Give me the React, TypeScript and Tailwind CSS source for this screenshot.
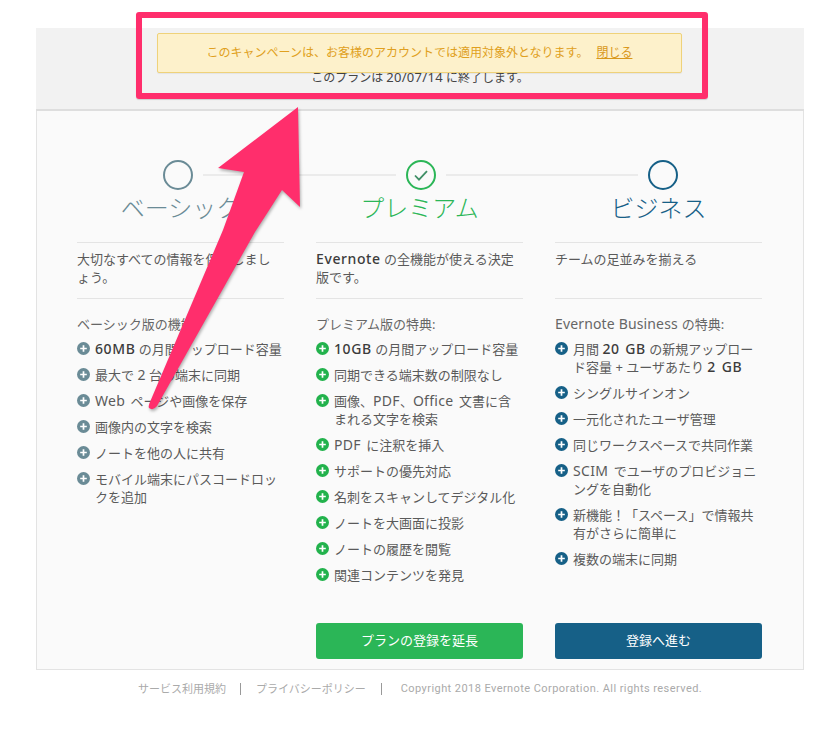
import React from "react";

const FONT = "font-['Noto_Sans','Noto_Sans_CJK_JP',sans-serif]";

function Plus({ color }: { color: string }) {
  return (
    <svg width="13" height="13" viewBox="0 0 13 13" className="absolute left-0 top-[2px]">
      <circle cx="6.5" cy="6.5" r="6.5" fill={color} />
      <path d="M6.5 3.2v6.6M3.2 6.5h6.6" stroke="#fff" strokeWidth="1.7" />
    </svg>
  );
}

function Item({ color, children }: { color: string; children: React.ReactNode }) {
  return (
    <li className="relative pl-[18px] mb-[8px] text-[13px] leading-[18px]">
      <Plus color={color} />
      {children}
    </li>
  );
}

const L = ({ children }: { children: React.ReactNode }) => (
  <span className="text-[14px] tracking-[0.3px] [word-spacing:1.5px]">{children}</span>
);

const B = ({ children }: { children: React.ReactNode }) => (
  <span className="text-[14px] tracking-[0.6px] [word-spacing:1.5px] font-medium text-[#3c3c3c]">{children}</span>
);

function Column({
  title,
  titleClass,
  desc,
  heading,
  color,
  items,
  button,
}: {
  title: string;
  titleClass: string;
  desc: React.ReactNode;
  heading: React.ReactNode;
  color: string;
  items: React.ReactNode[];
  button?: { label: string; cls: string };
}) {
  return (
    <div className="w-[207px] flex flex-col">
      <h2 className={`text-[24px] leading-[30px] font-light text-center h-[49px] ${titleClass}`}>{title}</h2>
      <div className="border-t border-[#e4e4e4] h-[56px] pt-[7px] text-[13px] leading-[18px]">{desc}</div>
      <div className="border-t border-[#e4e4e4] pt-[16px] text-[13px] leading-[18px] mb-[7px] text-[#666]">{heading}</div>
      <ul className="flex-1">
        {items.map((it, i) => (
          <Item key={i} color={color}>
            {it}
          </Item>
        ))}
      </ul>
      {button ? (
        <button className={`h-[36px] rounded-[3px] text-white text-[13px] ${button.cls}`}>{button.label}</button>
      ) : (
        <div className="h-[36px]" />
      )}
    </div>
  );
}

export default function App() {
  return (
    <div className={`relative w-[834px] h-[745px] overflow-hidden bg-white text-[#5a5a5a] ${FONT}`}>
      <div className="pt-[28px] ml-[36px] mr-[30px]">
        <header className="h-[83px] bg-[#f2f2f2] border-b-2 border-[#dedede] flex items-end justify-center pb-[23px] text-[12px] leading-[16px] text-[#444]">
          <p>このプランは <span className="text-[13px] tracking-[0.3px]">20/07/14</span> に終了します。</p>
        </header>
        <main className="h-[559px] bg-[#fafafa] border border-t-0 border-[#e3e3e3] px-[40px] pt-[49px] pb-[10px] flex flex-col">
          <div className="flex items-center ml-[86px] w-[515px] h-[30px] mb-[3px]">
            <span className="w-[30px] h-[30px] rounded-full border-2 border-[#6a8b96] shrink-0" />
            <span className="flex-1 h-[2px] bg-[#ebebeb] mx-[10px]" />
            <span className="w-[30px] h-[30px] rounded-full border-2 border-[#2bb657] shrink-0 flex items-center justify-center">
              <svg width="16" height="13" viewBox="0 0 16 13" fill="none">
                <path d="M2 6.5l4 4.2L14 2.2" stroke="#3f8f66" strokeWidth="1.8" />
              </svg>
            </span>
            <span className="flex-1 h-[2px] bg-[#ebebeb] mx-[10px]" />
            <span className="w-[30px] h-[30px] rounded-full border-2 border-[#166087] shrink-0" />
          </div>
          <div className="flex-1 flex gap-[32px]">
            <Column
              title="ベーシック"
              titleClass="text-[#6a8b96]"
              desc={<>大切なすべての情報を保存しまし<br />ょう。</>}
              heading="ベーシック版の機能:"
              color="#6a8b96"
              items={[
                <><B>60MB</B> の月間アップロード容量</>,
                <>最大で <L>2</L> 台の端末に同期</>,
                <><L>Web </L>ページや画像を保存</>,
                "画像内の文字を検索",
                "ノートを他の人に共有",
                "モバイル端末にパスコードロックを追加",
              ]}
            />
            <Column
              title="プレミアム"
              titleClass="text-[#2bb657]"
              desc={<><B>Evernote</B> の全機能が使える決定版です。</>}
              heading="プレミアム版の特典:"
              color="#22b24c"
              items={[
                <><B>10GB</B> の月間アップロード容量</>,
                "同期できる端末数の制限なし",
                <>画像、<L>PDF</L>、<L>Office </L>文書に含まれる文字を検索</>,
                <><L>PDF </L>に注釈を挿入</>,
                "サポートの優先対応",
                "名刺をスキャンしてデジタル化",
                "ノートを大画面に投影",
                "ノートの履歴を閲覧",
                "関連コンテンツを発見",
              ]}
              button={{ label: "プランの登録を延長", cls: "bg-[#2bb657]" }}
            />
            <Column
              title="ビジネス"
              titleClass="text-[#166087]"
              desc="チームの足並みを揃える"
              heading={<><span className="text-[14px] tracking-[0.15px]">Evernote Business </span>の特典:</>}
              color="#166087"
              items={[
                <>月間 <B>20 GB</B> の新規アップロード容量 + ユーザあたり <B>2 GB</B></>,
                "シングルサインオン",
                "一元化されたユーザ管理",
                "同じワークスペースで共同作業",
                <><L>SCIM </L>でユーザのプロビジョニングを自動化</>,
                "新機能！「スペース」で情報共有がさらに簡単に",
                "複数の端末に同期",
              ]}
              button={{ label: "登録へ進む", cls: "bg-[#166087]" }}
            />
          </div>
        </main>
        <footer className="flex items-center h-[12px] mt-[13px] ml-[102px] text-[11px] leading-[12px] text-[#aaaaaa]">
          <span>サービス利用規約</span>
          <span className="w-px h-[12px] bg-[#999] ml-[14px] mr-[15px]" />
          <span>プライバシーポリシー</span>
          <span className="w-px h-[12px] bg-[#999] ml-[15px] mr-[19px]" />
          <span className="font-['Roboto',sans-serif] tracking-[0.43px]">Copyright 2018 Evernote Corporation. All rights reserved.</span>
        </footer>
      </div>

      {/* notice over the header */}
      <div className="absolute left-[157px] top-[33px] w-[525px] h-[40px] bg-[#fdf1cb] border border-[#efd27a] rounded-[2px] flex items-center justify-center text-[12px] text-[#e0a020] shadow-[0_1px_1px_rgba(0,0,0,0.06)]">
        <span>このキャンペーンは、お客様のアカウントでは適用対象外となります。</span>
        <a className="ml-[8px] underline text-[#d9981a]">閉じる</a>
      </div>

      {/* annotation */}
      <div className="absolute left-[136px] top-[12px] w-[572px] h-[87px] border-[6px] border-[#ff2e6c] rounded-[3px] shadow-[0_1px_1px_rgba(0,0,0,0.15)]" />
      <svg width="834" height="745" className="absolute left-0 top-0 drop-shadow-[1px_2px_1.5px_rgba(0,0,0,0.3)]">
        <path
          d="M298 107 L300 207 L282 190 Q268 212 255 232 L157 406 Q153 411 149 408 Q148 406 150 402 L223 230 L244 172 L218 168 Z"
          fill="#ff2e6c"
        />
      </svg>
    </div>
  );
}
